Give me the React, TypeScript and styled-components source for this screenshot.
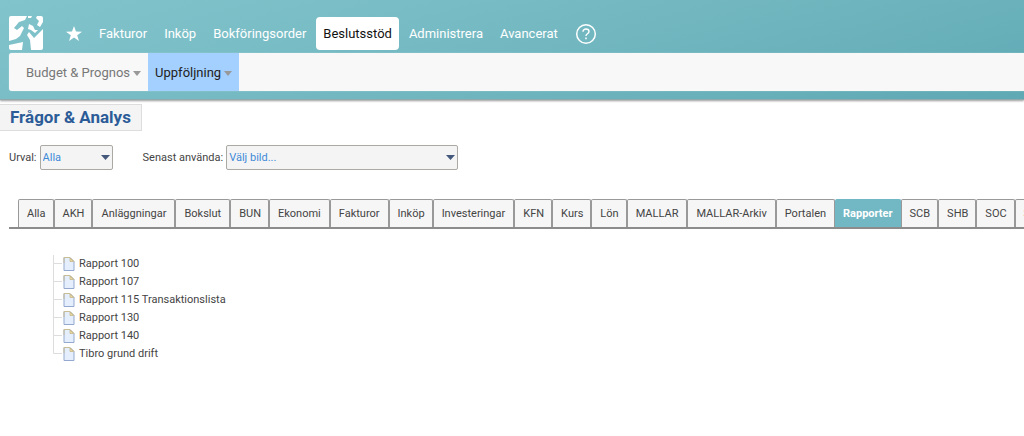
import React from "react";
import styled, { createGlobalStyle, css } from "styled-components";

const GlobalStyle = createGlobalStyle`
  * { box-sizing: border-box; }
  body {
    margin: 0;
    background: #fff;
    color: #444;
    font-family: Roboto, "Liberation Sans", sans-serif;
    font-size: 11px;
    line-height: 14px;
    overflow-x: hidden;
  }
  button, select { font-family: inherit; }
`;

const Header = styled.header`
  padding: 15px 0 8px 9px;
  background: linear-gradient(165deg, #82c4cc 0%, #73b8c1 50%, #5fa9b4 100%);
  border-bottom: 1px solid #8fa9ad;
  box-shadow: 0 1px 2px rgba(0, 0, 0, 0.4);
`;

const TopRow = styled.div`
  display: flex;
  align-items: center;
  height: 38px;
  padding-bottom: 2px;
`;

const Logo = styled.svg`
  display: block;
  flex: none;
  width: 34px;
  height: 34px;
`;

const Nav = styled.nav`
  display: flex;
  align-items: center;
  gap: 3px;
  margin-left: 16px;
`;

const NavItem = styled.button<{ $active?: boolean }>`
  display: flex;
  align-items: center;
  height: 33px;
  padding: 1px 7px 0;
  border: 0;
  border-radius: 4px;
  background: ${(p) => (p.$active ? "#fff" : "transparent")};
  color: ${(p) => (p.$active ? "#111" : "#fff")};
  font-size: 13px;
  line-height: 18px;
  white-space: nowrap;
  cursor: pointer;
`;

const SubBar = styled.nav`
  display: flex;
  height: 38px;
  padding-left: 10px;
  background: #f8f8f8;
  border-radius: 3px 0 0 3px;
  box-shadow: 0 0 1px #d9f0f4;
`;

const SubItem = styled.button<{ $active?: boolean }>`
  display: flex;
  align-items: center;
  gap: 3px;
  padding: 2px 7px 0;
  border: 0;
  background: ${(p) => (p.$active ? "#a3d0ff" : "transparent")};
  color: ${(p) => (p.$active ? "#222" : "#777")};
  font-size: 13px;
  line-height: 18px;
  white-space: nowrap;
  cursor: pointer;
`;

const Title = styled.h1`
  width: fit-content;
  margin: 4px 0 0;
  padding: 2px 10px 3px;
  background: #f4f4f4;
  border: 1px solid #ddd;
  border-left: 0;
  color: #2c5c98;
  font-size: 17px;
  line-height: 20px;
  font-weight: 700;
`;

const Filters = styled.form`
  display: flex;
  align-items: center;
  gap: 30px;
  padding: 14px 9px 0;
`;

const Field = styled.label`
  display: flex;
  align-items: center;
  gap: 3px;
  white-space: nowrap;
`;

const SelectWrap = styled.span<{ $width: number }>`
  position: relative;
  display: block;
  width: ${(p) => p.$width}px;
`;

const Select = styled.select`
  appearance: none;
  display: block;
  width: 100%;
  height: 25px;
  padding: 0 16px 0 2px;
  border: 1px solid #aaa9a4;
  border-radius: 2px;
  background: #f4f4f4;
  color: #3f8ad8;
  font-size: 11px;
`;

const SelectArrow = styled.svg`
  position: absolute;
  top: 10px;
  right: 3px;
  pointer-events: none;
`;

const TabStrip = styled.div`
  display: flex;
  margin: 29px 0 0 9px;
  padding-left: 9px;
  border-bottom: 2px solid #8c8c8c;
  overflow: hidden;
`;

const Tab = styled.button<{ $active?: boolean; $long?: boolean }>`
  flex: none;
  height: 28px;
  padding: ${(p) => (p.$long ? "0 8px" : "0 7px 0 8px")};
  border: 1px solid #999;
  border-bottom: 0;
  border-radius: 2px 2px 0 0;
  background: #f6f6f6;
  color: #444;
  font-size: 11px;
  line-height: 14px;
  cursor: pointer;
  ${(p) =>
    p.$active &&
    css`
      padding: 0 7px;
      background: #72b8c4;
      border-color: #72b8c4;
      color: #fff;
      font-weight: 700;
    `}
`;

const Tree = styled.ul`
  margin: 26px 0 0 53px;
  padding: 0;
  list-style: none;
`;

const Branch = styled.svg`
  display: block;
  flex: none;
`;

const TreeItem = styled.li`
  display: flex;
  align-items: center;
  height: 18px;
  white-space: nowrap;
`;

const PageIcon = styled.svg`
  display: block;
  flex: none;
  margin-right: 4px;
`;

const menu = ["Fakturor", "Inköp", "Bokföringsorder", "Beslutsstöd", "Administrera", "Avancerat"];
const tabs = [
  "Alla", "AKH", "Anläggningar", "Bokslut", "BUN", "Ekonomi", "Fakturor", "Inköp",
  "Investeringar", "KFN", "Kurs", "Lön", "MALLAR", "MALLAR-Arkiv", "Portalen",
  "Rapporter", "SCB", "SHB", "SOC", "S",
];
const reports = [
  "Rapport 100", "Rapport 107", "Rapport 115 Transaktionslista",
  "Rapport 130", "Rapport 140", "Tibro grund drift",
];

const Caret = () => (
  <svg width="8" height="5" viewBox="0 0 8 5" aria-hidden="true">
    <path d="M0 0h8L4 5z" fill="#999" />
  </svg>
);

function Dropdown({ label, value, width }: { label: string; value: string; width: number }) {
  return (
    <Field>
      {label}
      <SelectWrap $width={width}>
        <Select defaultValue={value}>
          <option>{value}</option>
        </Select>
        <SelectArrow width="9" height="5" viewBox="0 0 9 5" aria-hidden="true">
          <path d="M0 0h9L4.5 5z" fill="#44587c" />
        </SelectArrow>
      </SelectWrap>
    </Field>
  );
}

export default function App() {
  return (
    <>
      <GlobalStyle />
      <Header>
        <TopRow>
          <Logo viewBox="0 0 34 34" aria-hidden="true">
            <path
              fill="#fff"
              d="M2 0H18L16 4 10 6 5 12 8 14 13 10 15 12 11 20 7 23 0 25V2Q0 0 2 0zM19 0h4l-1 2-3 0zM28 0h4q2 0 2 2v4l-3 5-3-2 2-4-3-3zM20 8l4 2 2 4 3 0-3 3-4-3-3-1zM20 16l5 6 9-9v19q0 2-2 2H22l-1-10-3-5zM0 29l14-3-1 8H2q-2 0-2-2z"
            />
          </Logo>
          <Nav aria-label="Huvudmeny">
            <NavItem aria-label="Favoriter">
              <svg width="16" height="15" viewBox="0 0 16 15" aria-hidden="true">
                <path fill="#fff" d="M8 0l2 5.500 6 .2-4.800 3.600L13 15l-5-3.400L3 15l1.800-5.700L0 5.700l6-.2z" />
              </svg>
            </NavItem>
            {menu.map((name) => (
              <NavItem key={name} $active={name === "Beslutsstöd"}>
                {name}
              </NavItem>
            ))}
            <NavItem aria-label="Hjälp">
              <svg width="22" height="22" viewBox="0 0 22 22" fill="none" stroke="#fff" aria-hidden="true">
                <circle cx="11" cy="11" r="9.300" strokeWidth="1.500" />
                <path d="M8 8.700C8 6.900 9.300 6 11 6s3 1 3 2.600c0 2.200-3 2.200-3 4.400" strokeWidth="1.400" />
                <path d="M11 14.500v1.700" strokeWidth="1.500" />
              </svg>
            </NavItem>
          </Nav>
        </TopRow>
        <SubBar aria-label="Undermeny">
          <SubItem>
            Budget &amp; Prognos
            <Caret />
          </SubItem>
          <SubItem $active>
            Uppföljning
            <Caret />
          </SubItem>
        </SubBar>
      </Header>
      <main>
        <Title>Frågor &amp; Analys</Title>
        <Filters>
          <Dropdown label="Urval:" value="Alla" width={73} />
          <Dropdown label="Senast använda:" value="Välj bild..." width={232} />
        </Filters>
        <TabStrip role="tablist">
          {tabs.map((name) => (
            <Tab
              key={name}
              role="tab"
              aria-selected={name === "Rapporter"}
              $active={name === "Rapporter"}
              $long={name.length > 5}
            >
              {name}
            </Tab>
          ))}
        </TabStrip>
        <Tree>
          {reports.map((name, i) => (
            <TreeItem key={name}>
              <Branch width="10" height="18" viewBox="0 0 10 18" fill="none" stroke="#ddd" aria-hidden="true">
                <path d={i === reports.length - 1 ? "M.5 0v8.500H9" : "M.5 0v18M.5 8.500H9"} />
              </Branch>
              <PageIcon width="12" height="14" viewBox="0 0 12 14" aria-hidden="true">
                <path d="M1 .5h6l4 4v9H1z" fill="#e4eefc" stroke="#93a9cf" />
                <path d="M1 6V.5h6l4 4" fill="none" stroke="#c9bd94" />
                <path d="M7 1v3.500h3.500z" fill="#ecd9a0" stroke="#c2b183" strokeWidth=".7" />
              </PageIcon>
              {name}
            </TreeItem>
          ))}
        </Tree>
      </main>
    </>
  );
}
